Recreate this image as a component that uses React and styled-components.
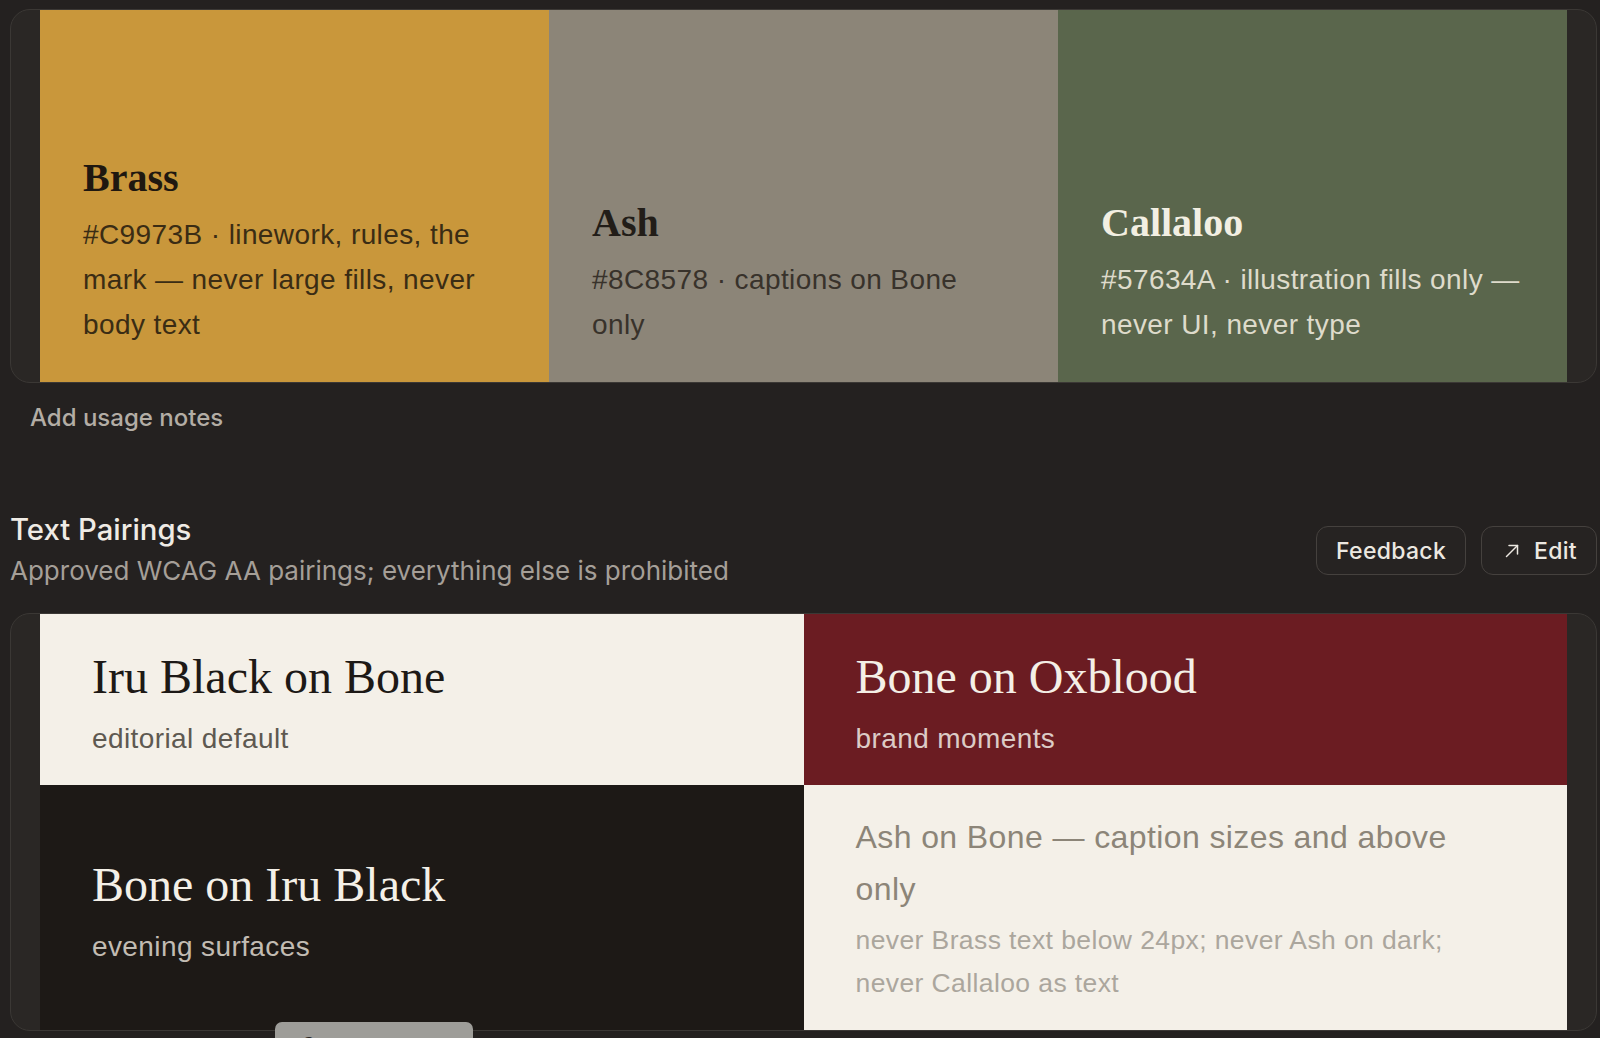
import React from "react";
import styled, { createGlobalStyle } from "styled-components";

const GlobalStyle = createGlobalStyle`
  html, body {
    margin: 0;
    padding: 0;
    overflow: hidden;
    background: #242120;
  }
  * { box-sizing: border-box; }
`;

const SERIF = `"Liberation Serif", "Times New Roman", serif`;
const BRAND_SANS = `"Liberation Sans", Arial, sans-serif`;
const UI_SANS = `Inter, "Liberation Sans", Arial, sans-serif`;

const Page = styled.div`
  height: 1038px;
  padding: 9px 3px 0 10px;
  display: flex;
  flex-direction: column;
`;

const Card = styled.div`
  border: 1px solid #3b3835;
  border-radius: 20px;
  background: #2a2725;
  padding: 0 29px;
  overflow: hidden;
  display: grid;
  grid-template-columns: ${(p) => `repeat(${p.$cols}, 1fr)`};
`;

const Swatch = styled.div`
  background: ${(p) => p.$bg};
  color: ${(p) => p.$fg};
  min-height: 372px;
  padding: 0 40px 35px 43px;
  display: flex;
  flex-direction: column;
  justify-content: flex-end;
  gap: 10px;
`;

const SwatchName = styled.div`
  font-family: ${SERIF};
  font-weight: 700;
  font-size: 40px;
  line-height: 48px;
`;

const SwatchNote = styled.div`
  font-family: ${BRAND_SANS};
  font-size: 28px;
  line-height: 45px;
  letter-spacing: 0.4px;
  max-width: 422px;
  color: ${(p) => p.$fg};
`;

const UsageNote = styled.div`
  margin: 20px 0 0 20px;
  font-family: ${UI_SANS};
  font-weight: 500;
  font-size: 24px;
  line-height: 30px;
  color: #b3ada5;
`;

const SectionHeader = styled.div`
  margin-top: 78px;
  display: flex;
  align-items: center;
  justify-content: space-between;
`;

const HeaderText = styled.div`
  display: flex;
  flex-direction: column;
  gap: 3px;
`;

const SectionTitle = styled.div`
  font-family: ${UI_SANS};
  font-weight: 500;
  font-size: 29.3px;
  line-height: 38px;
  color: #efebe5;
`;

const SectionSub = styled.div`
  font-family: ${UI_SANS};
  font-size: 26px;
  line-height: 38px;
  color: #a59f98;
`;

const Actions = styled.div`
  display: flex;
  gap: 15px;
`;

const Button = styled.button`
  height: 49px;
  display: inline-flex;
  align-items: center;
  gap: 15px;
  padding: 0 19px 0 ${(p) => (p.$icon ? 23 : 19)}px;
  border: 1.5px solid #45413e;
  border-radius: 12px;
  background: #262322;
  color: #ece8e1;
  font-family: ${UI_SANS};
  font-weight: 500;
  font-size: 23px;
  letter-spacing: 0.3px;
  cursor: pointer;
`;

const PairingsCard = styled(Card)`
  margin-top: 23px;
`;

const Tile = styled.div`
  background: ${(p) => p.$bg};
  padding: ${(p) => (p.$tight ? "26px 52px 25px" : "32px 52px 24px")};
  display: flex;
  flex-direction: column;
  justify-content: center;
  gap: ${(p) => (p.$tight ? "4px" : "8px")};
`;

const PairTitle = styled.div`
  font-family: ${SERIF};
  font-size: 48px;
  line-height: 62px;
  color: ${(p) => p.$fg};
`;

const PairNote = styled.div`
  font-family: ${BRAND_SANS};
  font-size: 28px;
  line-height: 45px;
  letter-spacing: 0.4px;
  color: ${(p) => p.$fg};
`;

const AshLead = styled.div`
  font-family: ${BRAND_SANS};
  font-size: 32px;
  line-height: 52px;
  letter-spacing: 0.4px;
  color: #8c8578;
`;

const AshRule = styled.div`
  font-family: ${BRAND_SANS};
  font-size: 26.5px;
  line-height: 43px;
  letter-spacing: 0.4px;
  color: #aba69d;
`;

const PeekTab = styled.div`
  position: fixed;
  left: 275px;
  top: 1022px;
  width: 198px;
  height: 40px;
  border-radius: 7px 7px 0 0;
  background: #9e9d99;
  padding: 11px 0 0 26px;
  font-family: ${UI_SANS};
  font-weight: 500;
  font-size: 20px;
  color: #2a2725;
  overflow: hidden;
`;

const ArrowIcon = () => (
  <svg width="14" height="14" viewBox="0 0 14 14" fill="none" stroke="currentColor" strokeWidth="1.5" strokeLinecap="round" strokeLinejoin="round">
    <path d="M1.5 12.5 L12.5 1.5" />
    <path d="M4 1.5 H12.5 V10" />
  </svg>
);

const swatches = [
  { name: "Brass", bg: "#C9973B", fg: "#1f1810", note: "#C9973B · linework, rules, the mark — never large fills, never body text", noteFg: "#3a2c14" },
  { name: "Ash", bg: "#8C8578", fg: "#221d18", note: "#8C8578 · captions on Bone only", noteFg: "#38322b" },
  { name: "Callaloo", bg: "#5A664C", fg: "#f2efe2", note: "#57634A · illustration fills only — never UI, never type", noteFg: "#dedbcb" },
];

export default function App() {
  return (
    <>
      <GlobalStyle />
      <Page>
        <Card $cols={3}>
          {swatches.map((s) => (
            <Swatch key={s.name} $bg={s.bg} $fg={s.fg}>
              <SwatchName>{s.name}</SwatchName>
              <SwatchNote $fg={s.noteFg}>{s.note}</SwatchNote>
            </Swatch>
          ))}
        </Card>
        <UsageNote>Add usage notes</UsageNote>

        <SectionHeader>
          <HeaderText>
            <SectionTitle>Text Pairings</SectionTitle>
            <SectionSub>Approved WCAG AA pairings; everything else is prohibited</SectionSub>
          </HeaderText>
          <Actions>
            <Button>Feedback</Button>
            <Button $icon>
              <ArrowIcon />
              Edit
            </Button>
          </Actions>
        </SectionHeader>

        <PairingsCard $cols={2}>
          <Tile $bg="#F4F0E8">
            <PairTitle $fg="#1d1916">Iru Black on Bone</PairTitle>
            <PairNote $fg="#5e5951">editorial default</PairNote>
          </Tile>
          <Tile $bg="#6B1C22">
            <PairTitle $fg="#f4efe6">Bone on Oxblood</PairTitle>
            <PairNote $fg="#dccbc6">brand moments</PairNote>
          </Tile>
          <Tile $bg="#1D1916">
            <PairTitle $fg="#f4f0e8">Bone on Iru Black</PairTitle>
            <PairNote $fg="#c2bcb3">evening surfaces</PairNote>
          </Tile>
          <Tile $bg="#F4F0E8" $tight>
            <AshLead>Ash on Bone — caption sizes and above only</AshLead>
            <AshRule>never Brass text below 24px; never Ash on dark; never Callaloo as text</AshRule>
          </Tile>
        </PairingsCard>
      </Page>
      <PeekTab>Comments</PeekTab>
    </>
  );
}
